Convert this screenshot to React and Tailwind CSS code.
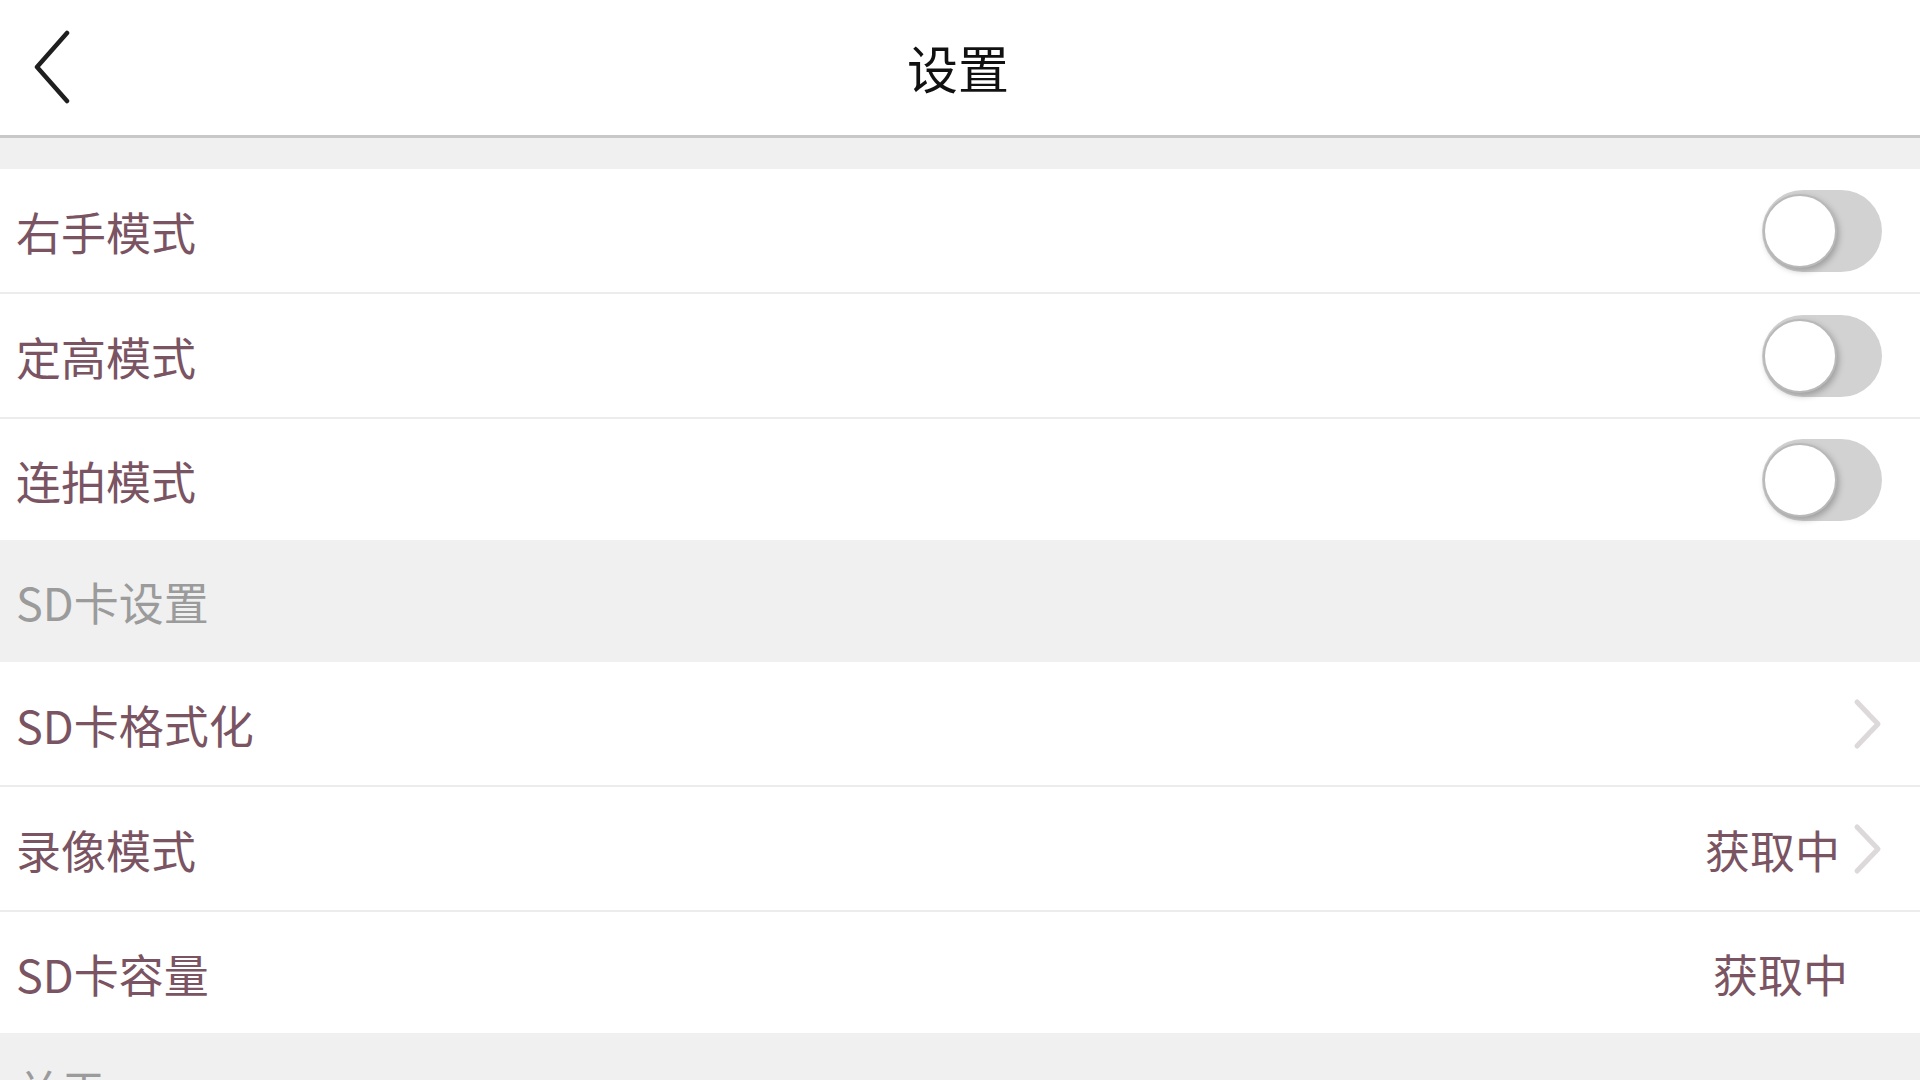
import React from 'react';

const Toggle = () => (
    <div className="relative w-[120px] h-[82px] rounded-full bg-[#d2d2d2]">
        <div className="absolute left-[1px] top-[4px] w-[74px] h-[74px] rounded-full bg-white border-2 border-[#b9b9b9] shadow-[2px_3px_6px_rgba(0,0,0,0.25)]" />
    </div>
);

const Chevron = () => (
    <svg width="30" height="52" viewBox="0 0 30 52" fill="none">
        <path d="M5 4 L26 26 L5 48" stroke="#ddd8da" strokeWidth="5" strokeLinecap="round" strokeLinejoin="round" />
    </svg>
);

const Row = ({ label, last, children }) => (
    <div className={`flex items-center justify-between bg-white pl-[16px] ${last ? 'h-[121px]' : 'h-[125px] border-b-2 border-[#ececec]'}`}>
        <span className="text-[45px] leading-none text-[#7a5462] pt-[1px]">{label}</span>
        {children}
    </div>
);

const SectionHeader = ({ label, height }) => (
    <div className={`flex items-center bg-[#f0f0f0] pl-[16px] ${height}`}>
        <span className="text-[45px] leading-none text-[#9b9b9b] pt-[1px]">{label}</span>
    </div>
);

export default function App() {
    return (
        <div className="w-[1920px] h-[1080px] overflow-hidden bg-[#f0f0f0] font-['Noto_Sans_CJK_SC','Noto_Sans',sans-serif]">
            {/* navigation bar */}
            <div className="grid grid-cols-[1fr_auto_1fr] items-center h-[138px] bg-white border-b-[3px] border-[#c8c8c8]">
                <div className="pl-[33px]">
                    <svg width="40" height="76" viewBox="0 0 40 76" fill="none">
                        <path d="M34 3 L4 37 L34 71" stroke="#1f1f1f" strokeWidth="4.5" strokeLinecap="round" strokeLinejoin="round" />
                    </svg>
                </div>
                <span className="text-[51px] leading-none text-[#111] pr-[4px]">设置</span>
                <div />
            </div>

            <div className="h-[31px]" />

            <Row label="右手模式">
                <div className="pr-[38px]"><Toggle /></div>
            </Row>
            <Row label="定高模式">
                <div className="pr-[38px]"><Toggle /></div>
            </Row>
            <Row label="连拍模式" last>
                <div className="pr-[38px]"><Toggle /></div>
            </Row>

            <SectionHeader label="SD卡设置" height="h-[122px]" />

            <Row label="SD卡格式化">
                <div className="pr-[38px]"><Chevron /></div>
            </Row>
            <Row label="录像模式">
                <div className="flex items-center gap-[12px] pr-[38px]">
                    <span className="text-[45px] leading-none text-[#7a5462] pt-[1px]">获取中</span>
                    <Chevron />
                </div>
            </Row>
            <Row label="SD卡容量" last>
                <span className="text-[45px] leading-none text-[#7a5462] pt-[1px] pr-[72px]">获取中</span>
            </Row>

            <div className="bg-[#f0f0f0] pl-[16px] pt-[34px]">
                <span className="text-[45px] leading-none text-[#9b9b9b]">关于</span>
            </div>
        </div>
    );
}
